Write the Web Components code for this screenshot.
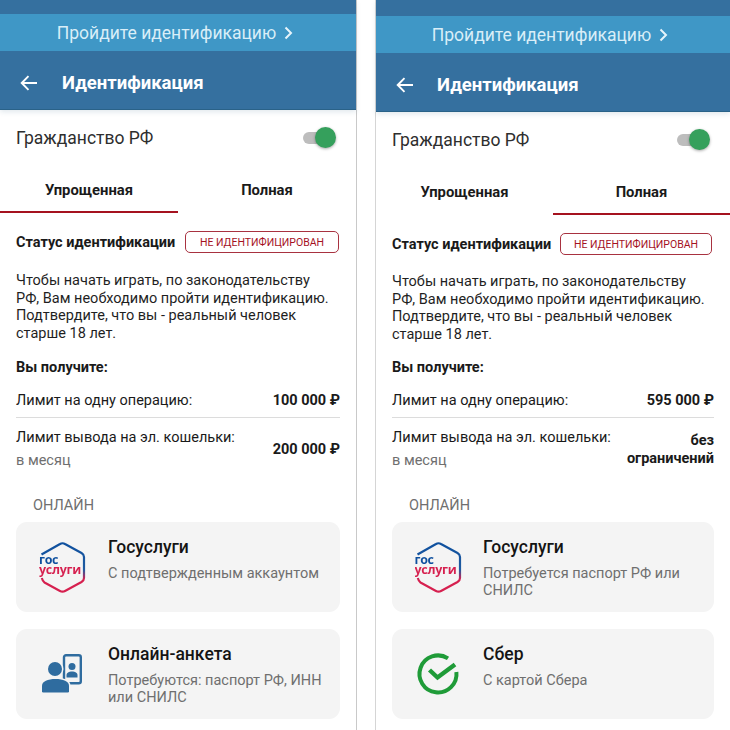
<!DOCTYPE html>
<html lang="ru">
<head>
<meta charset="utf-8">
<title>Идентификация</title>
<style>
  html, body { margin: 0; padding: 0; background: #fff; }
  body { font-family: Roboto, "Liberation Sans", sans-serif; color: #1a1a1a; height: 730px; overflow: hidden; }
  .pair { display: flex; height: 730px; }
  svg { display: block; }
</style>
</head>
<body>
<div class="pair">
  <id-screen active="0" style="--screen-w:356px;--rule:1px 0 0 0 #c9c9c9;--icon-w:92px;">
    <method-card title="Госуслуги" sub="С подтвержденным аккаунтом">
      <gos-logo slot="icon"></gos-logo>
    </method-card>
    <method-card title="Онлайн-анкета" sub="Потребуются: паспорт РФ, ИНН или СНИЛС">
      <svg slot="icon" width="46" height="46" viewBox="0 0 46 46">
        <rect x="25" y="4.200" width="16.800" height="28" rx="2" fill="none" stroke="#2f6c9f" stroke-width="2.400"/>
        <circle cx="33" cy="15.500" r="3.500" fill="#2f6c9f"/>
        <path fill="#2f6c9f" d="M27.500 26.500v-2.400c0-2.400 2.500-3.600 5.500-3.600s5.500 1.200 5.500 3.600v2.400z"/>
        <circle cx="16" cy="18" r="7" fill="#2f6c9f" stroke="#f4f4f4" stroke-width="3" paint-order="stroke"/>
        <path fill="#2f6c9f" stroke="#f4f4f4" stroke-width="3" paint-order="stroke" d="M3 40.200v-5.400c0-4.500 5.800-6.800 13.500-6.800s13.500 2.300 13.500 6.800v5.400a1.300 1.300 0 0 1-1.300 1.300H4.300A1.300 1.300 0 0 1 3 40.200z"/>
      </svg>
    </method-card>
  </id-screen>
  <div style="width:20px;flex:none"></div>
  <id-screen active="1" shift="2" style="--screen-w:354px;--rule:-1px 0 0 0 #d5d5d5;--icon-w:91px;">
    <method-card title="Госуслуги" sub="Потребуется паспорт РФ или СНИЛС">
      <gos-logo slot="icon"></gos-logo>
    </method-card>
    <method-card title="Сбер" sub="С картой Сбера">
      <svg slot="icon" width="46" height="46" viewBox="0 0 46 46">
        <path fill="none" stroke="#1f9b38" stroke-width="4" d="M41.400 21A18.500 18.500 0 1 1 33 7.400"/>
        <path fill="none" stroke="#1f9b38" stroke-width="4.400" d="M14.500 19l8 7.500L40 13.500"/>
      </svg>
    </method-card>
  </id-screen>
</div>

<script>
class GosLogo extends HTMLElement {
  constructor() {
    super();
    const uid = "g" + Math.random().toString(36).slice(2, 8);
    this.attachShadow({ mode: "open" }).innerHTML = `
      <style>
        :host { display: block; width: 48px; height: 52px; position: relative; }
        svg { display: block; }
        .word {
          position: absolute; left: 1px; top: 14.400px; padding-bottom: 4px; white-space: pre;
          font: 700 12.500px/9.500px "Open Sans", Roboto, sans-serif; letter-spacing: -.3px;
          background: linear-gradient(#0d4f9e 9.500px, #d6204f 9.500px);
          -webkit-background-clip: text; background-clip: text; color: transparent;
        }
      </style>
      <svg width="48" height="52" viewBox="0 0 48 52">
        <defs>
          <linearGradient id="${uid}" x1="0" y1="0" x2="0" y2="52" gradientUnits="userSpaceOnUse">
            <stop offset="0" stop-color="#0d4f9e"/>
            <stop offset=".55" stop-color="#1f5aa0"/>
            <stop offset=".74" stop-color="#d6204f"/>
            <stop offset="1" stop-color="#d6204f"/>
          </linearGradient>
        </defs>
        <path fill="none" stroke="url(#${uid})" stroke-width="2.200" stroke-linejoin="round"
          d="M3.500 13.500 L22 3 Q24.500 1.500 27 3 L43.500 12 Q46 13.500 46 16 V37 Q46 39.500 43.500 41 L27 50 Q24.500 51.300 22 50 L6.500 41.500 Q4.800 40.500 3.800 37"/>
      </svg>
      <div class="word">гос
услуги</div>`;
  }
}
customElements.define("gos-logo", GosLogo);

class MethodCard extends HTMLElement {
  constructor() {
    super();
    this.attachShadow({ mode: "open" }).innerHTML = `
      <style>
        :host { display: flex; box-sizing: border-box; height: 90px; background: #f4f4f4; border-radius: 11px; }
        .icon { flex: none; width: var(--icon-w, 92px); display: flex; align-items: center; justify-content: center; }
        .txt { flex: 1; padding: 15px 16px 0 0; min-width: 0; }
        .t { font-size: 17.500px; font-weight: 500; line-height: 21px; color: #141414; }
        .s { font-size: 14.500px; line-height: 17px; color: #6f6f6f; margin-top: 7px; }
      </style>
      <div class="icon"><slot name="icon"></slot></div>
      <div class="txt">
        <div class="t"></div>
        <div class="s"></div>
      </div>`;
  }
  connectedCallback() {
    this.shadowRoot.querySelector(".t").textContent = this.getAttribute("title");
    this.shadowRoot.querySelector(".s").textContent = this.getAttribute("sub");
    this.removeAttribute("title");
  }
}
customElements.define("method-card", MethodCard);

class LimitRow extends HTMLElement {
  constructor() {
    super();
    this.attachShadow({ mode: "open" }).innerHTML = `
      <style>
        :host { display: flex; align-items: center; justify-content: space-between; gap: 12px; font-size: 14.500px; }
        .v { font-weight: 700; text-align: right; line-height: 18px; color: #1a1a1a; flex: none; }
        .l { line-height: 18px; }
        ::slotted([slot=note]) { display: block; color: #6f6f6f; margin-top: 5px; }
      </style>
      <div class="l"><slot></slot><slot name="note"></slot></div>
      <div class="v"><slot name="value"></slot></div>`;
  }
}
customElements.define("limit-row", LimitRow);

class IdScreen extends HTMLElement {
  constructor() {
    super();
    this.attachShadow({ mode: "open" });
  }
  connectedCallback() {
    const active = this.getAttribute("active");
    const shift = Number(this.getAttribute("shift") || 0);
    const isFull = active === "1";
    const val1 = isFull ? "595 000 ₽" : "100 000 ₽";
    const val2 = isFull ? "без<br>ограничений" : "200 000 ₽";
    this.shadowRoot.innerHTML = `
      <style>
        :host { display: block; flex: none; width: var(--screen-w); height: 730px; box-shadow: var(--rule); position: relative; }
        .top { background: #35709f; border-bottom: 1px solid #2a6288; box-shadow: 0 2px 5px rgba(40,90,130,.14); padding-top: ${14 + shift}px; position: relative; }
        .banner { height: 37px; background: #3f97c6; display: flex; align-items: center; justify-content: center; gap: 8px; color: #d9eef8; font-size: 17.500px; padding-right: 6px; }
        .bar { box-sizing: border-box; height: 58px; display: flex; align-items: center; padding: 6px 0 0 20px; gap: ${24 - shift / 2}px; color: #fff; font-size: 18.500px; font-weight: 700; }
        .body { padding: 0 16px; }
        .cit { height: 56px; display: flex; align-items: center; justify-content: space-between; font-size: 17.500px; color: #2e2e2e; }
        .sw { width: 33px; height: 22px; position: relative; margin-right: 4px; }
        .sw i { position: absolute; left: 0; right: 4px; top: 5px; height: 12px; border-radius: 6px; background: #bdbdbd; }
        .sw b { position: absolute; right: 0; top: 0; width: 21px; height: 21px; border-radius: 50%; background: #35a05c; box-shadow: 0 1px 3px rgba(0,0,0,.35); }
        .tabs { display: flex; margin: 0 -16px; height: 47px; }
        .tab { flex: 1; display: flex; align-items: center; justify-content: center; font-size: 14.800px; font-weight: 700; color: #1a1a1a; border-bottom: 2px solid transparent; box-sizing: border-box; padding-top: 2px; }
        .tab.on { border-bottom-color: #a5121f; }
        .status { display: flex; align-items: center; justify-content: space-between; margin-top: 18px; font-size: 14.500px; font-weight: 700; }
        .badge { box-sizing: border-box; width: ${154 - shift}px; margin-right: ${1 + shift / 2}px; height: 22px; border: 1px solid #a83240; border-radius: 5px; color: #a5121f; font-size: 10.500px; font-weight: 400; display: flex; align-items: center; justify-content: center; }
        p { margin: ${19 - shift / 2}px 0 0; padding-right: 6px; font-size: 14.500px; line-height: 17.500px; color: #1f1f1f; }
        h4 { margin: ${17 - shift / 2}px 0 0; font-size: 14.500px; font-weight: 700; line-height: 18px; }
        .sep { height: 1px; background: #dcdcdc; margin: 7px 0 11px; }
        .online { margin: 0 0 0 17px; font-size: 14.500px; color: #6f6f6f; line-height: 18px; padding-top: 27px; padding-bottom: 7px; }
        .cards { display: flex; flex-direction: column; gap: 17px; }
      </style>
      <div class="top">
        <div class="banner">Пройдите идентификацию
          <svg width="9" height="14" viewBox="0 0 9 14"><path d="M1.500 1.500L7 7l-5.500 5.500" fill="none" stroke="#e6f4fb" stroke-width="2"/></svg>
        </div>
        <div class="bar">
          <svg width="18" height="16" viewBox="0 0 18 16"><path d="M17 8H2M8.500 1.200L1.700 8l6.800 6.800" fill="none" stroke="#fff" stroke-width="1.900"/></svg>
          <span>Идентификация</span>
        </div>
      </div>
      <div class="body">
        <div class="cit"><span>Гражданство РФ</span><div class="sw"><i></i><b></b></div></div>
        <div class="tabs">
          <div class="tab ${isFull ? "" : "on"}">Упрощенная</div>
          <div class="tab ${isFull ? "on" : ""}">Полная</div>
        </div>
        <div class="status"><span>Статус идентификации</span><span class="badge">НЕ ИДЕНТИФИЦИРОВАН</span></div>
        <p>Чтобы начать играть, по законодательству РФ, Вам необходимо пройти идентификацию. Подтвердите, что вы - реальный человек старше 18 лет.</p>
        <h4>Вы получите:</h4>
        <limit-row style="margin-top:15px"><span>Лимит на одну операцию:</span><span slot="value">${val1}</span></limit-row>
        <div class="sep"></div>
        <limit-row><span>Лимит вывода на эл. кошельки:</span><span slot="note">в месяц</span><span slot="value">${val2}</span></limit-row>
        <div class="online">ОНЛАЙН</div>
        <div class="cards"><slot></slot></div>
      </div>`;
  }
}
customElements.define("id-screen", IdScreen);
</script>
</body>
</html>
